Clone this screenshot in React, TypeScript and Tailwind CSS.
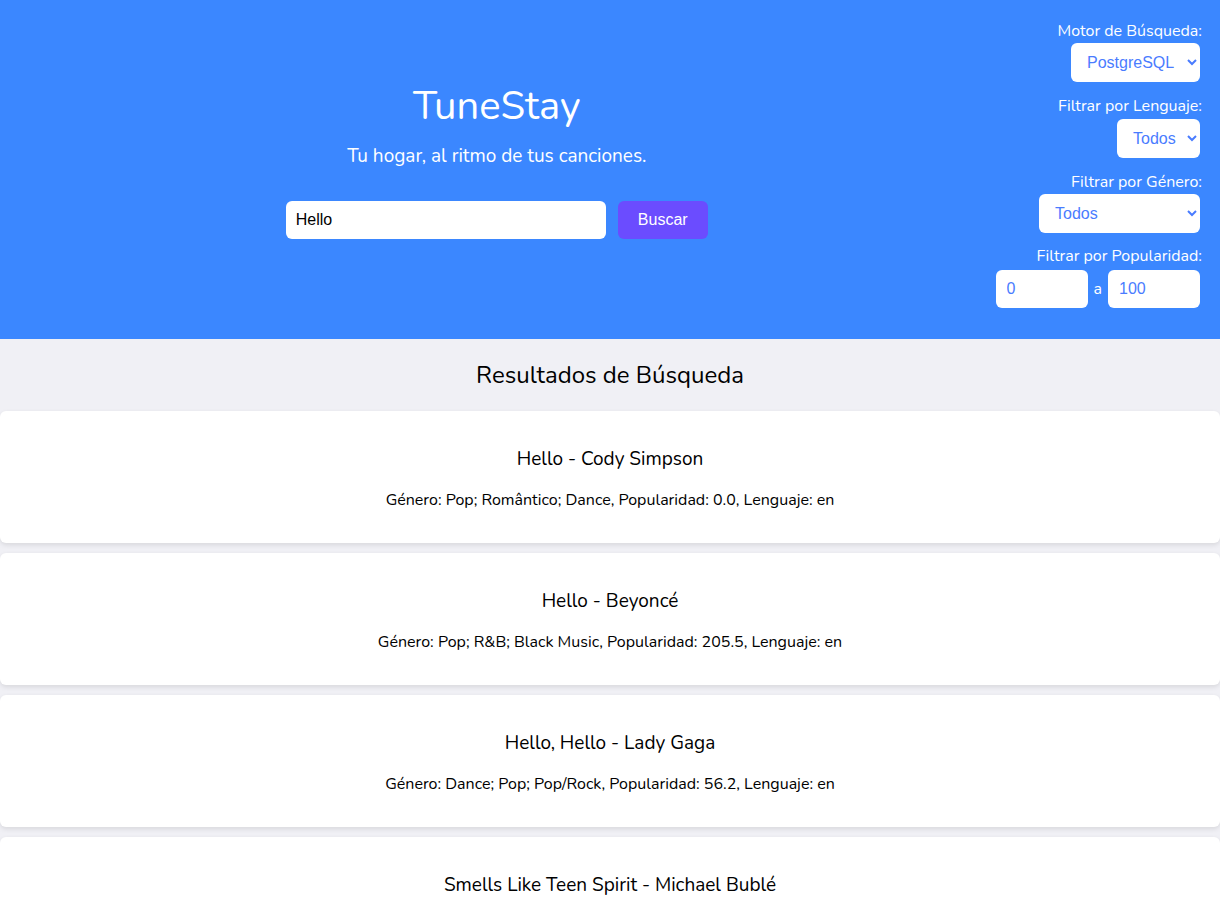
import React from 'react';

interface Song {
  title: string;
  artist: string;
  genre: string;
  popularity: string;
  lang: string;
}

const songs: Song[] = [
  { title: 'Hello', artist: 'Cody Simpson', genre: 'Pop; Romântico; Dance', popularity: '0.0', lang: 'en' },
  { title: 'Hello', artist: 'Beyoncé', genre: 'Pop; R&B; Black Music', popularity: '205.5', lang: 'en' },
  { title: 'Hello, Hello', artist: 'Lady Gaga', genre: 'Dance; Pop; Pop/Rock', popularity: '56.2', lang: 'en' },
  { title: 'Smells Like Teen Spirit', artist: 'Michael Bublé', genre: 'Rock; Grunge', popularity: '88.1', lang: 'en' },
];

const selectCls =
  "h-[39px] rounded-md bg-white pl-3 pr-1 text-[16px] text-[#4a7cff] outline-none font-['Liberation_Sans',Arial,sans-serif]";

const numCls =
  "h-[38px] w-[92px] rounded-md bg-white px-[11px] text-[16px] text-[#4a7cff] outline-none font-['Liberation_Sans',Arial,sans-serif]";

const Filters: React.FC = () => (
  <div className="flex flex-col items-end pt-[21px] pr-[18px] text-white text-[16px]">
    <label className="leading-[20px] mb-[2px]">Motor de Búsqueda:</label>
    <select className={`${selectCls} w-[129px] mr-[2px]`} defaultValue="pg">
      <option value="pg">PostgreSQL</option>
    </select>
    <label className="leading-[20px] mt-[14px] mb-[3px]">Filtrar por Lenguaje:</label>
    <select className={`${selectCls} w-[83px] mr-[2px]`}>
      <option>Todos</option>
    </select>
    <label className="leading-[20px] mt-[14px] mb-[2px]">Filtrar por Género:</label>
    <select className={`${selectCls} w-[161px] mr-[2px]`}>
      <option>Todos</option>
    </select>
    <label className="leading-[20px] mt-[13px] mb-[3px]">Filtrar por Popularidad:</label>
    <div className="flex items-center gap-[6px] mr-[2px] mt-[1px]">
      <input defaultValue="0" className={numCls} />
      <span className="text-[16px]">a</span>
      <input defaultValue="100" className={numCls} />
    </div>
  </div>
);

const SongCard: React.FC<{ song: Song }> = ({ song }) => (
  <div className="bg-white rounded-md shadow-[0_2px_5px_rgba(0,0,0,0.1)] h-[132px] flex flex-col items-center pt-[36px] text-black">
    <h3 className="text-[19px] leading-[24px]">
      {song.title} - {song.artist}
    </h3>
    <p className="text-[16px] leading-[20px] mt-[19px]">
      Género: {song.genre}, Popularidad: {song.popularity}, Lenguaje: {song.lang}
    </p>
  </div>
);

export default function App() {
  return (
    <div className="min-h-[910px] bg-[#f0f0f5] font-['Nunito','Lato','Noto_Sans',sans-serif]">
      <header className="bg-[#3b87ff] h-[339px] flex">
        <div className="flex-1 flex flex-col items-center pt-[82px] pr-[2px] text-white">
          <h1 className="text-[40px] leading-[48px]">TuneStay</h1>
          <p className="text-[19px] leading-[24px] mt-[14px]">Tu hogar, al ritmo de tus canciones.</p>
          <div className="flex gap-[12px] mt-[33px]">
            <input
              defaultValue="Hello"
              className="h-[38px] w-[320px] rounded-md bg-white px-[10px] text-[16px] text-black outline-none font-['Liberation_Sans',Arial,sans-serif]"
            />
            <button className="h-[38px] w-[90px] rounded-md bg-[#6b4cff] text-white text-[16px] font-['Liberation_Sans',Arial,sans-serif]">
              Buscar
            </button>
          </div>
        </div>
        <Filters />
      </header>
      <main>
        <h2 className="text-center text-[24px] leading-[32px] pt-[20px] pb-[20px] text-black">
          Resultados de Búsqueda
        </h2>
        <div className="flex flex-col gap-[10px]">
          {songs.map((s, i) => (
            <SongCard key={i} song={s} />
          ))}
        </div>
      </main>
    </div>
  );
}
